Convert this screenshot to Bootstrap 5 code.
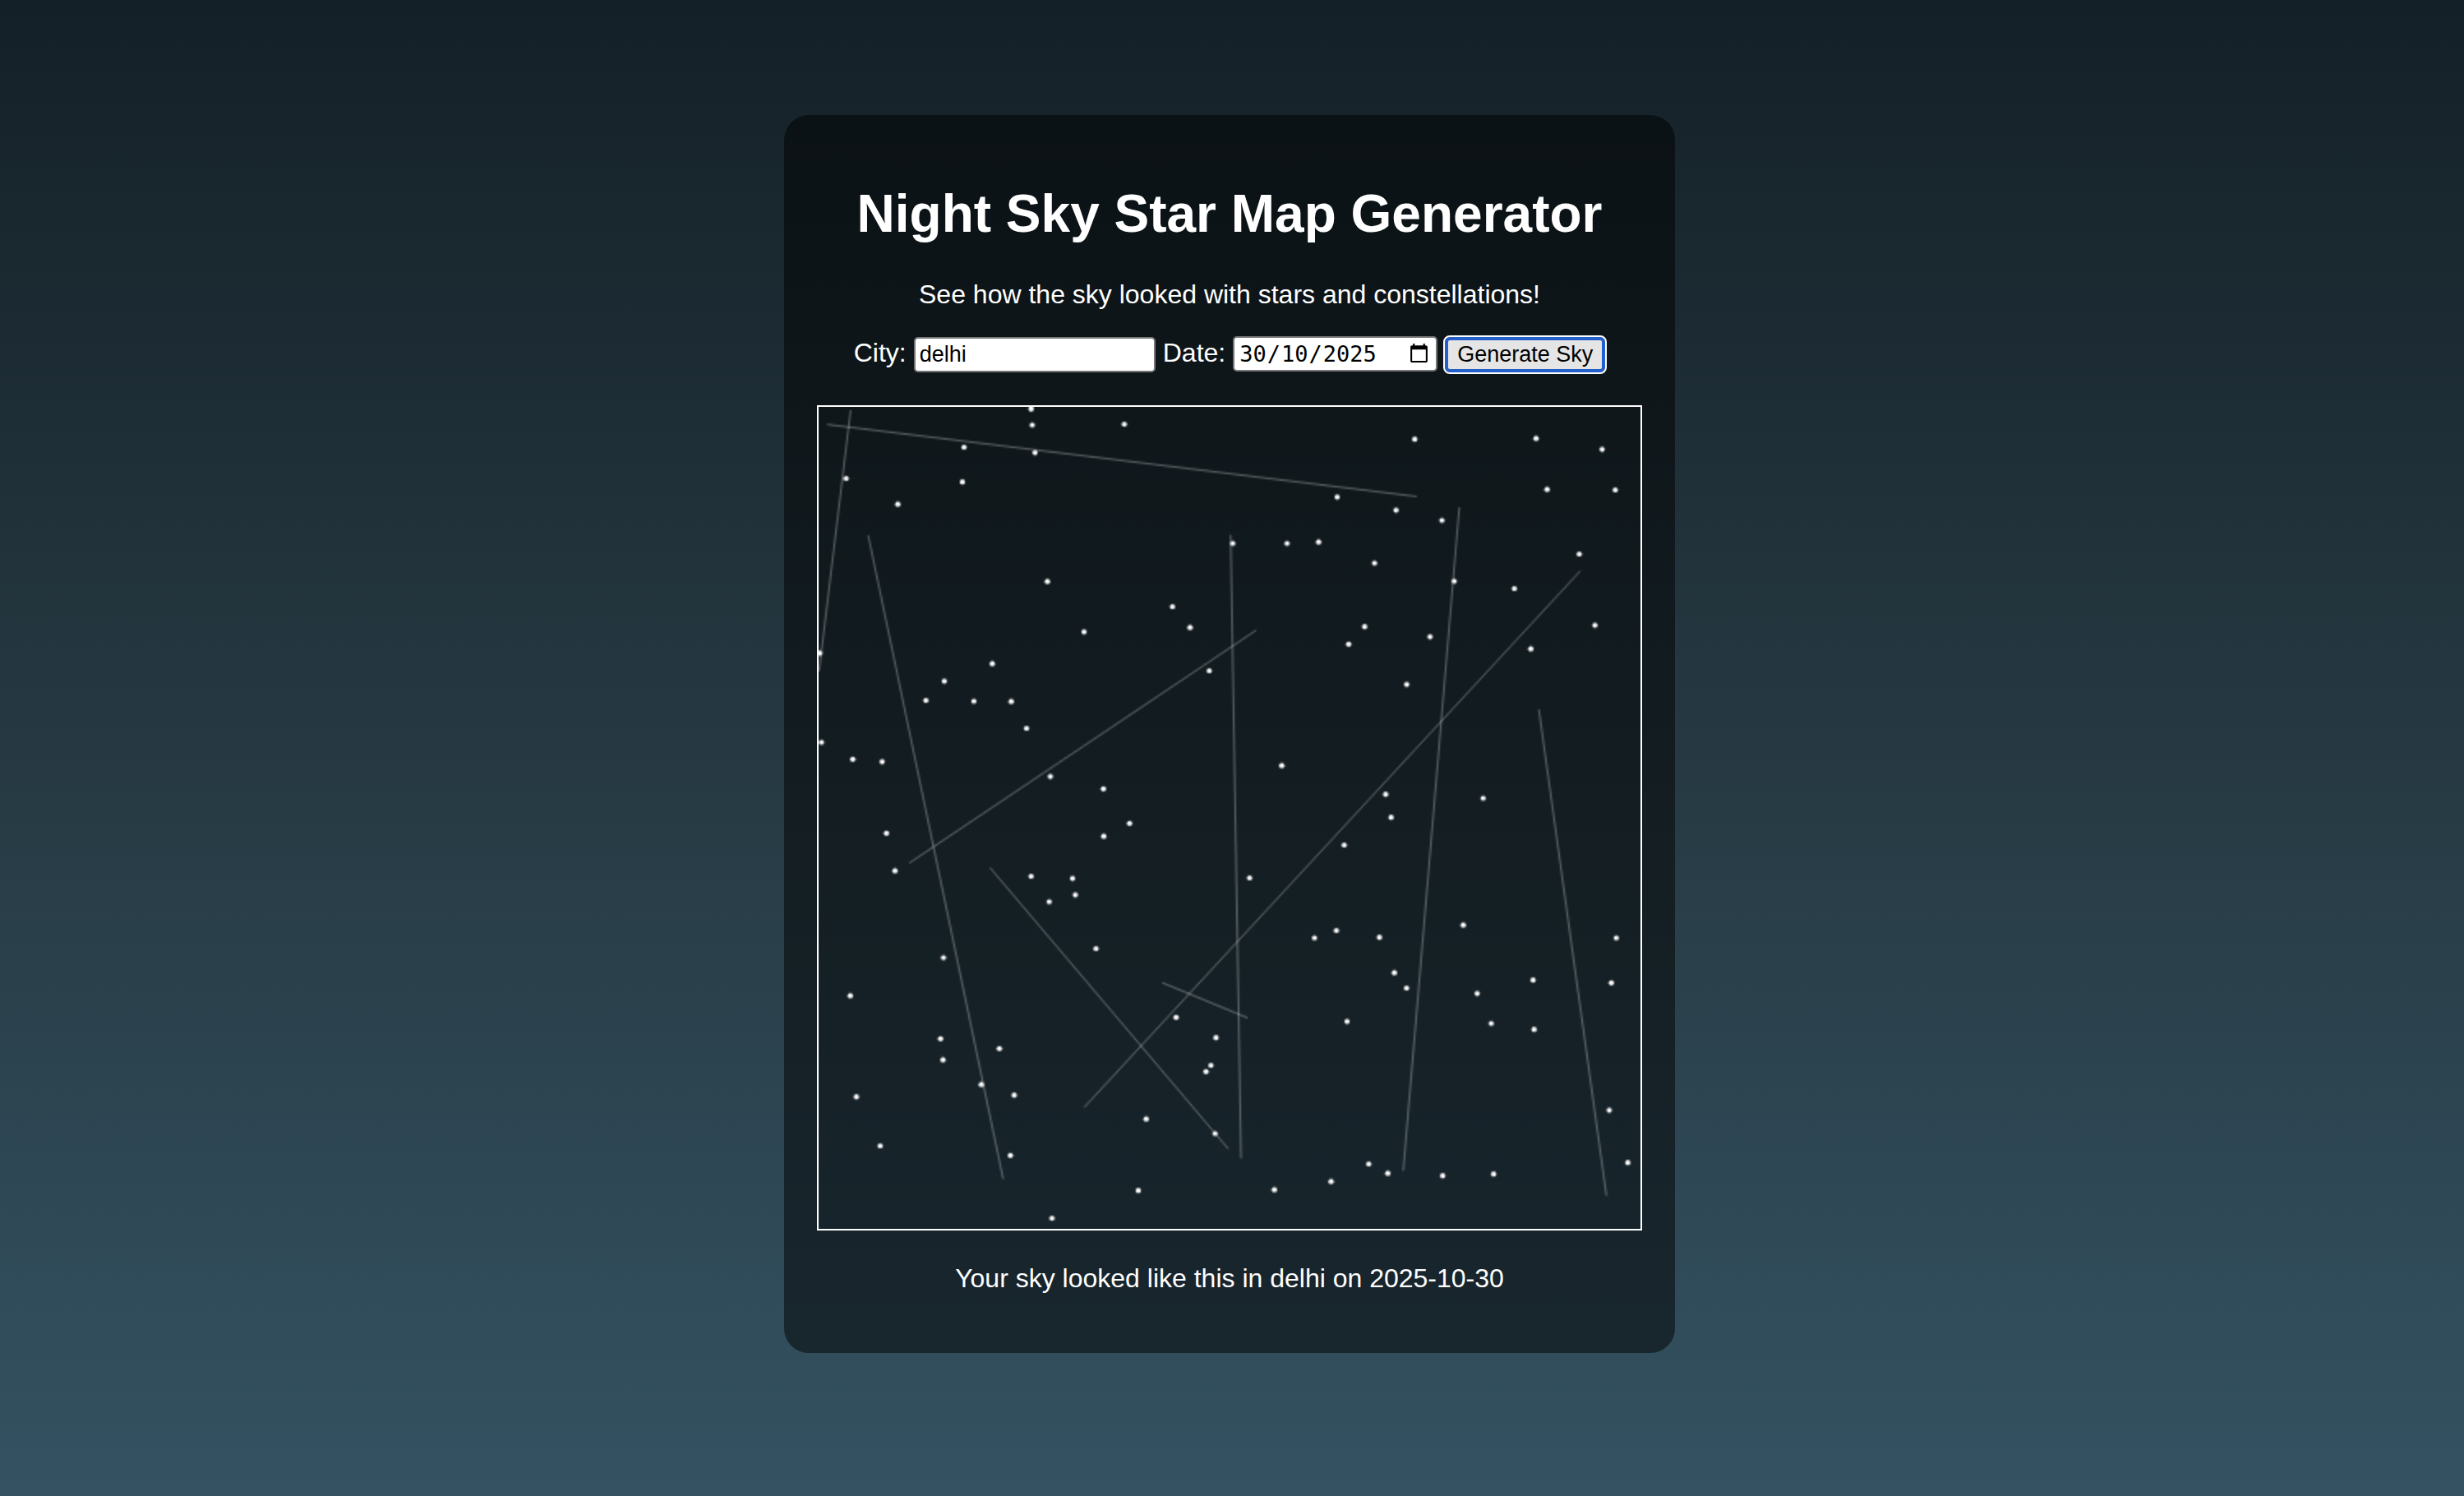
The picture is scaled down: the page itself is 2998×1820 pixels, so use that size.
<!DOCTYPE html>
<html lang="en-GB">
<head>
<meta charset="utf-8">
<meta name="viewport" content="width=device-width, initial-scale=1">
<title>Night Sky Star Map Generator</title>
<link href="https://cdn.jsdelivr.net/npm/bootstrap@5.3.0/dist/css/bootstrap.min.css" rel="stylesheet">
<style>
  body {
    font-family: "Liberation Sans", Arial, sans-serif;
    font-size: 32px;
    line-height: 36px;
    color: #fff;
    background: linear-gradient(to bottom, #142027, #263942, #345262) fixed;
  }
  .sky-page { padding: 140px 6px 140px 0; }
  .sky-panel {
    max-width: 1084px;
    padding: 40px;
    border-radius: 30px;
    background: rgba(0, 0, 0, .5);
  }
  .sky-title { font-size: 64px; line-height: 72px; margin: 44px 0; }
  .sky-intro { margin-bottom: 33px; }
  .sky-form { gap: 9px; margin-bottom: 40px; }
  .sky-field {
    height: 43px;
    padding: 2px 5px;
    border: 2px solid #767676;
    border-radius: 5px;
    background: #fff;
    color: #000;
    font-size: 27px;
    line-height: 35px;
  }
  .sky-city { width: 294px; }
  .sky-date { width: 249px; font-family: "DejaVu Sans Mono", monospace; }
  /* day / month / year order; the separators fall into the free columns */
  .sky-date::-webkit-datetime-edit { padding: 0; }
  .sky-date::-webkit-datetime-edit-fields-wrapper { display: inline-grid; padding: 0; }
  .sky-date::-webkit-datetime-edit-day-field { grid-area: 1 / 1; padding: 0 1px; }
  .sky-date::-webkit-datetime-edit-month-field { grid-area: 1 / 3; padding: 0 1px; }
  .sky-date::-webkit-datetime-edit-year-field { grid-area: 1 / 5; padding: 0 1px; }
  .sky-date::-webkit-datetime-edit-text { grid-row: 1; }
  .sky-go {
    height: 43px;
    width: 195px;
    padding: 0;
    border: 4px solid #255fcb;
    border-radius: 6px;
    outline: 2px solid #fff;
    background: #e5e5e5;
    color: #000;
    font-size: 27px;
    line-height: 35px;
  }
  .sky-map { border: 2px solid #fff; }
  .sky-caption { margin: 40px 0 33px; }
</style>
</head>
<body class="min-vh-100">
<main class="sky-page d-flex justify-content-center">
  <section class="sky-panel w-100 text-center">
    <h1 class="sky-title fw-bold">Night Sky Star Map Generator</h1>
    <p class="sky-intro">See how the sky looked with stars and constellations!</p>
    <form class="sky-form d-flex flex-wrap justify-content-center align-items-baseline" onsubmit="return false">
      <label for="city">City:</label>
      <input class="sky-field sky-city" type="text" id="city" value="delhi">
      <label for="date">Date:</label>
      <input class="sky-field sky-date" type="date" id="date" value="2025-10-30">
      <button class="sky-go" type="submit">Generate Sky</button>
    </form>
    <canvas class="sky-map d-block w-100" id="sky" width="500" height="500" role="img" aria-label="Star map"></canvas>
    <p class="sky-caption">Your sky looked like this in delhi on 2025-10-30</p>
  </section>
</main>
<script src="https://cdn.jsdelivr.net/npm/bootstrap@5.3.0/dist/js/bootstrap.bundle.min.js"></script>
<script>
  // star centres: x, y
  const stars = [
    [129.3,1.3],[130,11],[186,10.5],[88.5,24.5],[131.7,27.8],[16.8,43.5],[87.5,45.7],[48.2,59.2],[139.2,106.2],[215.3,121.5],
    [226,134.2],[161.5,136.8],[0.8,149.8],[105.7,156.2],[237.7,160.5],[252,83],[285,83],[304.2,82.2],[315.5,54.8],[351.3,62.8],
    [379.2,69],[362.7,19.7],[436.5,19.2],[476.7,25.8],[443.2,50.2],[484.7,50.5],[338.2,95],[386.7,106],[423.3,110.5],[462.8,89.5],
    [332.2,133.7],[322.5,144.3],[372,139.8],[472.3,132.8],[433.3,147.2],[76.5,166.8],[65.3,178.5],[94.5,179],[117.2,179.2],[126.5,195.5],
    [1.8,204],[20.8,214.3],[38.7,215.8],[141,224.8],[173.3,232.3],[189.2,253.3],[173.5,261.2],[41.3,259.3],[46.5,282.2],[129.3,285.5],
    [154.5,286.8],[156.2,296.8],[140.3,301],[168.8,329.5],[357.8,168.8],[281.8,218.2],[345,235.7],[348.3,249.7],[404.3,238],[319.8,266.5],
    [262.2,286.5],[315,318.5],[301.7,323],[341.2,322.7],[392.2,315.2],[485.3,323],[76,335],[19.3,358.2],[74.2,384.3],[75.7,397.2],
    [110,390.3],[99,412.2],[119,418.7],[23,419.7],[37.5,449.5],[116.7,455.3],[217.5,371.3],[241.8,383.7],[238.7,400.5],[235.7,404.3],
    [199.3,433.2],[241.2,442],[194.5,476.7],[142,493.5],[350.3,344.2],[357.7,353.5],[321.5,373.8],[400.7,356.8],[434.7,348.7],[409.2,375],
    [435.3,378.7],[482.3,350.3],[481,427.8],[492.3,459.7],[334.7,460.5],[346.3,466.2],[311.8,471.2],[277.3,476.2],[379.7,467.7],[410.7,466.7]
  ];
  // constellation lines: x1, y1, x2, y2
  const lines = [
    [5.2,10.7,363.8,54.5],[19.5,2,0.3,160.8],[30.2,78.2,112.3,469.7],[55.2,277.5,266.3,135.8],[250.7,77.8,257,457.2],
    [389.8,61,355.7,464.7],[463.5,99.7,161.5,426.2],[104.3,280.3,249.2,451.3],[209.2,350.3,261,371.7],[438.2,184,479.3,479.8]
  ];
  const ctx = document.getElementById('sky').getContext('2d');
  ctx.fillStyle = '#fff';
  for (const [x, y] of stars) {
    ctx.beginPath();
    ctx.arc(x, y, 1.6, 0, Math.PI * 2);
    ctx.fill();
  }
  ctx.strokeStyle = 'rgba(255, 255, 255, .33)';
  for (const [x1, y1, x2, y2] of lines) {
    ctx.beginPath();
    ctx.moveTo(x1, y1);
    ctx.lineTo(x2, y2);
    ctx.stroke();
  }
</script>
</body>
</html>
